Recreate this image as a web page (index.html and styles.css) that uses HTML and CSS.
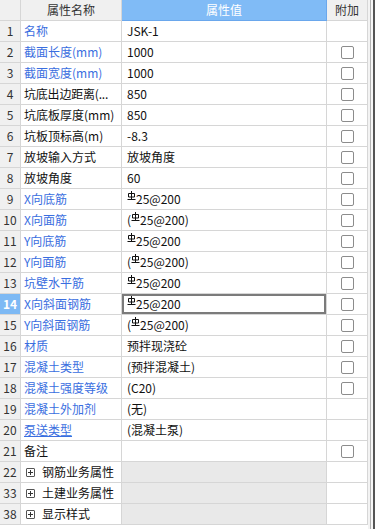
FILE: index.html
```html
<!DOCTYPE html>
<html lang="zh">
<head>
<meta charset="utf-8">
<link rel="stylesheet" href="styles.css">
</head>
<body>
<div class="wrap">
  <div class="grid">
    <div class="row head">
      <div class="c num"></div>
      <div class="c hname hc">属性名称</div>
      <div class="c val hc hsel">属性值</div>
      <div class="c add hc">附加</div>
    </div>

    <div class="row"><div class="c num">1</div><div class="c name blue">名称</div><div class="c val">JSK-1</div><div class="c add"></div></div>
    <div class="row"><div class="c num">2</div><div class="c name blue">截面长度(mm)</div><div class="c val">1000</div><div class="c add"><span class="cb"></span></div></div>
    <div class="row"><div class="c num">3</div><div class="c name blue">截面宽度(mm)</div><div class="c val">1000</div><div class="c add"><span class="cb"></span></div></div>
    <div class="row"><div class="c num">4</div><div class="c name tight">坑底出边距离(...</div><div class="c val">850</div><div class="c add"><span class="cb"></span></div></div>
    <div class="row"><div class="c num">5</div><div class="c name">坑底板厚度(mm)</div><div class="c val">850</div><div class="c add"><span class="cb"></span></div></div>
    <div class="row"><div class="c num">6</div><div class="c name">坑板顶标高(m)</div><div class="c val">-8.3</div><div class="c add"><span class="cb"></span></div></div>
    <div class="row"><div class="c num">7</div><div class="c name">放坡输入方式</div><div class="c val">放坡角度</div><div class="c add"><span class="cb"></span></div></div>
    <div class="row"><div class="c num">8</div><div class="c name">放坡角度</div><div class="c val">60</div><div class="c add"><span class="cb"></span></div></div>
    <div class="row"><div class="c num">9</div><div class="c name blue">X向底筋</div><div class="c val"><svg class="rb" viewBox="0 0 9 10"><path d="M4.5 0V8.5M1.5 2.5H7.5V6H1.5ZM0.5 8.5H8.5"/></svg>25@200</div><div class="c add"><span class="cb"></span></div></div>
    <div class="row"><div class="c num">10</div><div class="c name blue">X向面筋</div><div class="c val">(<svg class="rb" viewBox="0 0 9 10"><path d="M4.5 0V8.5M1.5 2.5H7.5V6H1.5ZM0.5 8.5H8.5"/></svg>25@200)</div><div class="c add"><span class="cb"></span></div></div>
    <div class="row"><div class="c num">11</div><div class="c name blue">Y向底筋</div><div class="c val"><svg class="rb" viewBox="0 0 9 10"><path d="M4.5 0V8.5M1.5 2.5H7.5V6H1.5ZM0.5 8.5H8.5"/></svg>25@200</div><div class="c add"><span class="cb"></span></div></div>
    <div class="row"><div class="c num">12</div><div class="c name blue">Y向面筋</div><div class="c val">(<svg class="rb" viewBox="0 0 9 10"><path d="M4.5 0V8.5M1.5 2.5H7.5V6H1.5ZM0.5 8.5H8.5"/></svg>25@200)</div><div class="c add"><span class="cb"></span></div></div>
    <div class="row"><div class="c num">13</div><div class="c name blue">坑壁水平筋</div><div class="c val"><svg class="rb" viewBox="0 0 9 10"><path d="M4.5 0V8.5M1.5 2.5H7.5V6H1.5ZM0.5 8.5H8.5"/></svg>25@200</div><div class="c add"><span class="cb"></span></div></div>
    <div class="row"><div class="c num cur">14</div><div class="c name blue">X向斜面钢筋</div><div class="c val sel"><svg class="rb" viewBox="0 0 9 10"><path d="M4.5 0V8.5M1.5 2.5H7.5V6H1.5ZM0.5 8.5H8.5"/></svg>25@200</div><div class="c add"><span class="cb"></span></div></div>
    <div class="row"><div class="c num">15</div><div class="c name blue">Y向斜面钢筋</div><div class="c val">(<svg class="rb" viewBox="0 0 9 10"><path d="M4.5 0V8.5M1.5 2.5H7.5V6H1.5ZM0.5 8.5H8.5"/></svg>25@200)</div><div class="c add"><span class="cb"></span></div></div>
    <div class="row"><div class="c num">16</div><div class="c name blue">材质</div><div class="c val">预拌现浇砼</div><div class="c add"><span class="cb"></span></div></div>
    <div class="row"><div class="c num">17</div><div class="c name blue">混凝土类型</div><div class="c val">(预拌混凝土)</div><div class="c add"><span class="cb"></span></div></div>
    <div class="row"><div class="c num">18</div><div class="c name blue">混凝土强度等级</div><div class="c val">(C20)</div><div class="c add"><span class="cb"></span></div></div>
    <div class="row"><div class="c num">19</div><div class="c name blue">混凝土外加剂</div><div class="c val">(无)</div><div class="c add"></div></div>
    <div class="row"><div class="c num">20</div><div class="c name blue ul">泵送类型</div><div class="c val">(混凝土泵)</div><div class="c add"></div></div>
    <div class="row"><div class="c num">21</div><div class="c name">备注</div><div class="c val"></div><div class="c add"><span class="cb"></span></div></div>
    <div class="row"><div class="c num">22</div><div class="c name grp"><span class="ex"></span>钢筋业务属性</div><div class="c val gv"></div><div class="c add"></div></div>
    <div class="row"><div class="c num">33</div><div class="c name grp"><span class="ex"></span>土建业务属性</div><div class="c val gv"></div><div class="c add"></div></div>
    <div class="row"><div class="c num">38</div><div class="c name grp"><span class="ex"></span>显示样式</div><div class="c val gv"></div><div class="c add"></div></div>
  </div>
  <div class="edge"><span class="e1"></span><span class="e2"></span><span class="e3"></span><span class="e4"></span></div>
</div>
</body>
</html>
```

FILE: styles.css
```css
* { box-sizing: border-box; }
html, body { margin: 0; padding: 0; background: #fff; }
body {
  font-family: "Noto Sans CJK SC", "Microsoft YaHei", "Noto Sans", sans-serif;
  font-size: 12px;
  color: #111;
  width: 375px;
  height: 529px;
  overflow: hidden;
}
.wrap { display: flex; height: 529px; }
.grid { width: 368px; display: flex; flex-direction: column; }
.row { display: flex; height: 21px; }
.c {
  height: 21px;
  border-right: 1px solid #d6d6d6;
  border-bottom: 1px solid #d6d6d6;
  display: flex;
  align-items: center;
  white-space: nowrap;
  line-height: 20px;
}
.num { width: 21px; justify-content: center; background: #f0f0f0; color: #333; font-size: 12px; }
.num.cur { background: #7db9f4; color: #fff; font-weight: bold; }
.name { width: 101px; padding-left: 3px; }
.hname { width: 101px; }
.name.tight { letter-spacing: -0.2px; }
.name.blue { color: #3a6ee0; }
.name.ul { text-decoration: underline; }
.val { width: 205px; padding-left: 5px; color: #111; }
.val.sel { box-shadow: inset 0 0 0 2px #7b7b7b; }
.val.gv { background: #e9e9e9; }
.add { width: 41px; justify-content: center; }
.head .c { height: 21px; background: #f0f0f0; justify-content: center; color: #333; padding: 0; }
.head .hsel { background: #80bbf6; color: #fff; border-right-color: #6aa7ec; border-bottom-color: #6aa7ec; }
.cb {
  display: block;
  width: 13px;
  height: 13px;
  border: 1px solid #8c8c8c;
  border-radius: 2px;
  background: #fff;
}
.rb {
  width: 9px;
  height: 10px;
  fill: none;
  stroke: #111;
  stroke-width: 1;
  position: relative;
  top: -3px;
  flex: none;
}
.grp { color: #111; }
.ex {
  display: block;
  width: 9px;
  height: 9px;
  border: 1px solid #555;
  border-radius: 1px;
  margin: 0 7px 0 2px;
  flex: none;
  background:
    linear-gradient(#333, #333) center / 5px 1px no-repeat,
    linear-gradient(#333, #333) center / 1px 5px no-repeat;
}
.edge { width: 7px; display: flex; height: 529px; }
.edge span { display: block; height: 100%; }
.e1 { width: 2px; background: #f3f3f3; }
.e2 { width: 1px; background: #b4b4b4; }
.e3 { width: 2px; background: #f7f7f7; }
.e4 { width: 2px; background: #555; }
```
